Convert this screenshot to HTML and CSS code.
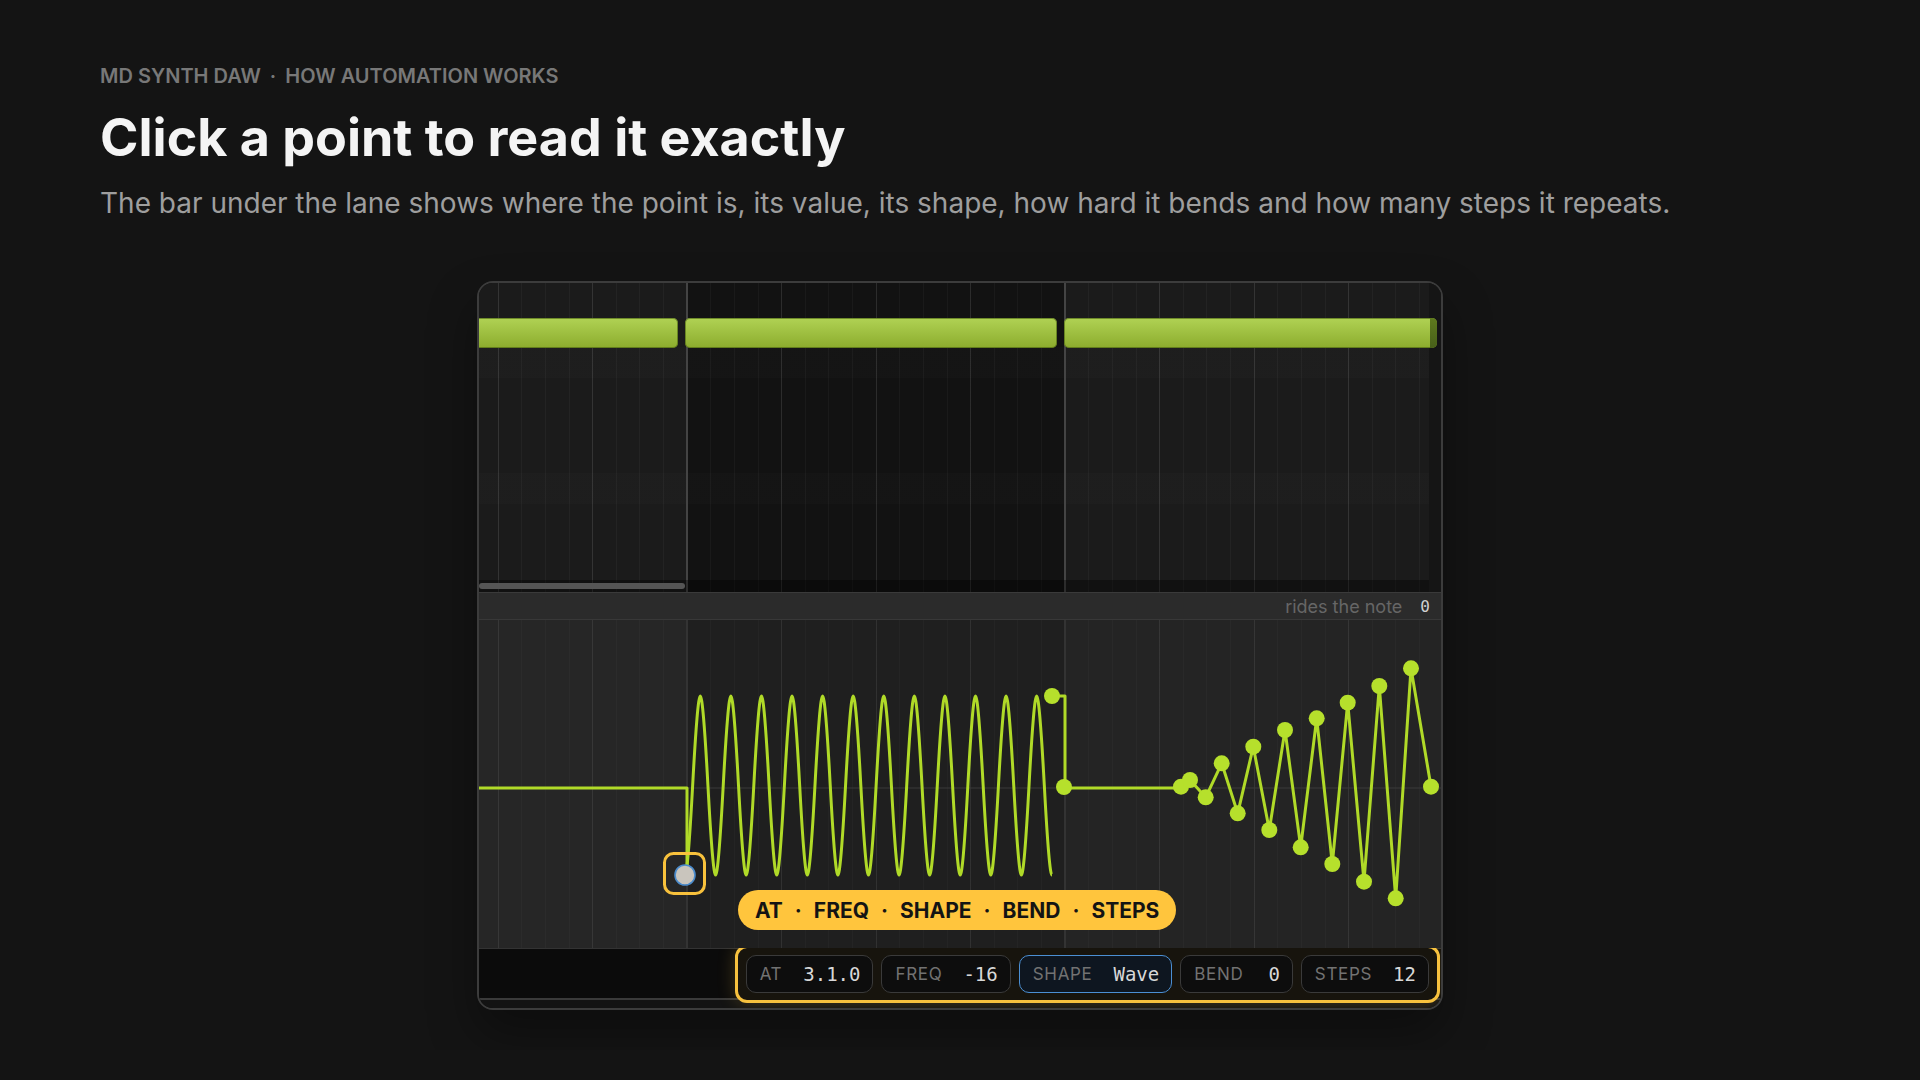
FILE: index.html
```html
<!DOCTYPE html>
<html lang="en">

<head>
    <meta charset="UTF-8">
    <meta name="viewport" content="width=device-width, initial-scale=1.0">
    <title>MD Synth DAW - How automation works</title>
    <link rel="stylesheet" href="styles.css">
</head>

<body>
    <div class="page">
        <p class="eyebrow">MD SYNTH DAW <span class="sep">·</span> HOW AUTOMATION WORKS</p>
        <h1 class="title">Click a point to read it exactly</h1>
        <p class="lead">The bar under the lane shows where the point is, its value, its shape, how hard it bends and how many steps it repeats.</p>

        <div class="daw">
            <div class="roll">
                <div class="clip" style="left:-8px;width:207px"></div>
                <div class="clip" style="left:206px;width:372px"></div>
                <div class="clip clip-end" style="left:585px;width:373px"></div>
                <div class="hscroll">
                    <div class="thumb"></div>
                </div>
            </div>

            <div class="lane-head">
                <span class="lane-hint">rides the note</span>
                <span class="lane-val">0</span>
            </div>

            <div class="lane">
                <svg class="curve" width="962" height="328" viewBox="0 0 962 328">
                    <line x1="0" y1="168" x2="962" y2="168" stroke="#3a3a3a" stroke-width="1" />
                    <g fill="none" stroke="#b0da28" stroke-width="3" stroke-linejoin="round">
                        <path d="M0,168 H208 V255" />
                        <path d="M206,255 q2.778,0 7.645,-89.5 t7.645,-89.5 t7.645,89.5 t7.645,89.5
                            t7.645,-89.5 t7.645,-89.5 t7.645,89.5 t7.645,89.5
                            t7.645,-89.5 t7.645,-89.5 t7.645,89.5 t7.645,89.5
                            t7.645,-89.5 t7.645,-89.5 t7.645,89.5 t7.645,89.5
                            t7.645,-89.5 t7.645,-89.5 t7.645,89.5 t7.645,89.5
                            t7.645,-89.5 t7.645,-89.5 t7.645,89.5 t7.645,89.5
                            t7.645,-89.5 t7.645,-89.5 t7.645,89.5 t7.645,89.5
                            t7.645,-89.5 t7.645,-89.5 t7.645,89.5 t7.645,89.5
                            t7.645,-89.5 t7.645,-89.5 t7.645,89.5 t7.645,89.5
                            t7.645,-89.5 t7.645,-89.5 t7.645,89.5 t7.645,89.5
                            t7.645,-89.5 t7.645,-89.5 t7.645,89.5 t7.645,89.5
                            t7.645,-89.5 t7.645,-89.5 t7.645,89.5 t7.645,89.5" />
                        <path d="M573,76 H586 V168 H702" />
                        <polyline points="702,166.7 711,160 726.7,177.3 742.7,143.3 758.7,193.3 774.3,126.7 790.3,210 806,110 821.7,227.3 837.7,98.3 853.3,244 868.7,82.7 885,261.7 900.3,66 916.7,278.3 932,48.3 952,166.7" />
                    </g>
                    <g fill="#b6e02c">
                        <circle cx="573" cy="76" r="8" />
                        <circle cx="585" cy="167" r="8" />
                        <circle cx="702" cy="166.7" r="8" />
                        <circle cx="711" cy="160" r="8" />
                        <circle cx="726.7" cy="177.3" r="8" />
                        <circle cx="742.7" cy="143.3" r="8" />
                        <circle cx="758.7" cy="193.3" r="8" />
                        <circle cx="774.3" cy="126.7" r="8" />
                        <circle cx="790.3" cy="210" r="8" />
                        <circle cx="806" cy="110" r="8" />
                        <circle cx="821.7" cy="227.3" r="8" />
                        <circle cx="837.7" cy="98.3" r="8" />
                        <circle cx="853.3" cy="244" r="8" />
                        <circle cx="868.7" cy="82.7" r="8" />
                        <circle cx="885" cy="261.7" r="8" />
                        <circle cx="900.3" cy="66" r="8" />
                        <circle cx="916.7" cy="278.3" r="8" />
                        <circle cx="932" cy="48.3" r="8" />
                        <circle cx="952" cy="166.7" r="8" />
                    </g>
                    <!-- selected point -->
                    <rect x="185.5" y="233.5" width="40" height="40" rx="9" fill="none" stroke="#f8c13c" stroke-width="3" />
                    <circle cx="206" cy="255" r="10" fill="#c9c5bd" stroke="#4a8bcc" stroke-width="1.6" />
                </svg>

                <div class="callout">
                    <span>AT</span><span class="dot">·</span><span>FREQ</span><span class="dot">·</span><span>SHAPE</span><span class="dot">·</span><span>BEND</span><span class="dot">·</span><span>STEPS</span>
                </div>
            </div>

            <div class="footer">
                <div class="inspector">
                    <div class="field"><span class="label">AT</span><span class="value">3.1.0</span></div>
                    <div class="field"><span class="label">FREQ</span><span class="value">-16</span></div>
                    <div class="field active"><span class="label">SHAPE</span><span class="value">Wave</span></div>
                    <div class="field"><span class="label">BEND</span><span class="value wide">0</span></div>
                    <div class="field"><span class="label">STEPS</span><span class="value">12</span></div>
                </div>
            </div>
            <div class="bottom"></div>
        </div>
    </div>
</body>

</html>
```

FILE: styles.css
```css
body {
    margin: 0;
    background-color: #141414;
    color: #eee;
    font-family: Inter, "Noto Sans", sans-serif;
}

.page {
    padding: 64px 100px 40px;
}

.eyebrow {
    margin: 0;
    font-size: 20px;
    line-height: 24px;
    font-weight: 600;
    color: #787878;
}

.eyebrow .sep {
    margin: 0 4px;
}

.title {
    margin: 20px 0 0;
    font-size: 52px;
    line-height: 60px;
    font-weight: 700;
    color: #f4f4f4;
}

.lead {
    margin: 18px 0 0;
    font-size: 28px;
    line-height: 34px;
    color: #9e9e9e;
}

/* panel */
.daw {
    width: 966px;
    margin: 61px auto 0;
    box-sizing: border-box;
    border: 2px solid #3c3c3c;
    border-radius: 16px;
    overflow: hidden;
    background-color: #0b0b0b;
    box-shadow: 0 24px 48px rgba(0, 0, 0, 0.35);
}

.roll {
    position: relative;
    height: 309px;
    background:
        linear-gradient(90deg, transparent calc(100% - 12px), #151515 calc(100% - 12px)),
        linear-gradient(90deg, transparent 206.7px, #444 206.7px 208.7px, transparent 208.7px 584.7px, #444 584.7px 586.7px, transparent 586.7px),
        repeating-linear-gradient(90deg, transparent 0 18.7px, rgba(255, 255, 255, 0.08) 18.7px 19.7px, transparent 19.7px 94.5px),
        repeating-linear-gradient(90deg, transparent 0 18.7px, rgba(255, 255, 255, 0.035) 18.7px 19.7px, transparent 19.7px 23.625px),
        repeating-linear-gradient(180deg, transparent 0 64px, rgba(255, 255, 255, 0.012) 64px 95px, transparent 95px 126px),
        linear-gradient(90deg, #1b1b1b 207.7px, #121212 207.7px 585.7px, #1b1b1b 585.7px);
}

.clip {
    position: absolute;
    top: 35px;
    height: 30px;
    box-sizing: border-box;
    border-radius: 5px;
    background: linear-gradient(#b0d254, #8cac2d);
    box-shadow: inset 0 0 0 1px rgba(70, 95, 15, 0.6);
}

.clip-end::after {
    content: "";
    position: absolute;
    top: 0;
    right: 0;
    bottom: 0;
    width: 7px;
    border-radius: 0 5px 5px 0;
    background: linear-gradient(#5f7a1e, #48601a);
}

.hscroll {
    position: absolute;
    left: 0;
    right: 12px;
    bottom: 0;
    height: 12px;
    background-color: rgba(0, 0, 0, 0.35);
}

.thumb {
    width: 206px;
    height: 6px;
    margin-top: 3px;
    border-radius: 3px;
    background-color: #555;
}

.lane-head {
    display: flex;
    justify-content: flex-end;
    align-items: center;
    gap: 18px;
    height: 28px;
    box-sizing: border-box;
    padding-right: 11px;
    border-top: 1px solid #3a3a3a;
    border-bottom: 1px solid #383838;
    background-color: #2b2b2b;
}

.lane-hint {
    font-size: 18px;
    color: #666;
}

.lane-val {
    font-family: "DejaVu Sans Mono", monospace;
    font-size: 16px;
    color: #d0d0d0;
}

.lane {
    position: relative;
    height: 328px;
    background:
        linear-gradient(90deg, transparent 206.7px, #333 206.7px 208.7px, transparent 208.7px 584.7px, #333 584.7px 586.7px, transparent 586.7px),
        repeating-linear-gradient(90deg, transparent 0 18.7px, rgba(255, 255, 255, 0.06) 18.7px 19.7px, transparent 19.7px 94.5px),
        repeating-linear-gradient(90deg, transparent 0 18.7px, rgba(255, 255, 255, 0.025) 18.7px 19.7px, transparent 19.7px 23.625px),
        linear-gradient(90deg, #262626 207.7px, #1f1f1f 207.7px 585.7px, #242424 585.7px);
}

.curve {
    display: block;
}

.callout {
    position: absolute;
    left: 259px;
    top: 270px;
    display: flex;
    align-items: center;
    gap: 12px;
    height: 40px;
    padding: 0 17px;
    border-radius: 20px;
    background-color: #ffc53d;
    color: #141414;
    font-size: 21px;
    font-weight: 700;
}

.footer {
    display: flex;
    justify-content: flex-end;
    align-items: center;
    height: 50px;
    box-sizing: border-box;
    padding-right: 1px;
    border-top: 1px solid #333;
    background-color: #0b0b0b;
}

.inspector {
    display: flex;
    gap: 8px;
    padding: 7px 8px;
    border: 3px solid #f7c13e;
    border-radius: 12px;
    background-color: #17140d;
    box-shadow: 0 0 18px rgba(247, 193, 62, 0.22);
}

.field {
    display: flex;
    align-items: center;
    gap: 21px;
    height: 38px;
    box-sizing: border-box;
    padding: 0 12px 0 13px;
    border: 1.5px solid #3a3a3a;
    border-radius: 10px;
    background-color: #0d0d0d;
}

.field.active {
    border-color: #4b8fd3;
    background-color: #0e1620;
}

.label {
    font-size: 17px;
    letter-spacing: 0.04em;
    color: #727272;
}

.value {
    font-family: "DejaVu Sans Mono", monospace;
    font-size: 19px;
    color: #d8d8d8;
}

.value.wide {
    margin-left: 4px;
}

.bottom {
    height: 8px;
    border-top: 2px solid #3a3a3a;
    background-color: #131313;
}
```
